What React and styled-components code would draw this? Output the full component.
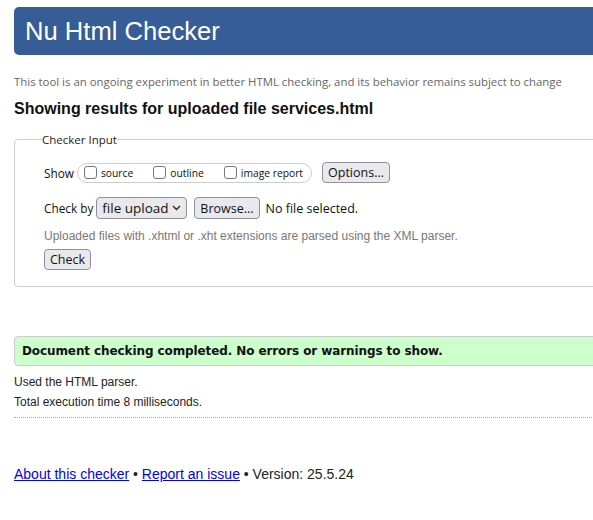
import React from "react";
import styled, { createGlobalStyle } from "styled-components";

const GlobalStyle = createGlobalStyle`
  body {
    margin: 0;
    overflow: hidden;
    background: #fff;
    color: #222;
    font-family: "Liberation Sans", Arial, sans-serif;
  }
`;

const Page = styled.div`
  width: 760px;
  padding: 7px 0 0 14px;
`;

const Header = styled.h1`
  margin: 0;
  height: 48px;
  display: flex;
  align-items: center;
  padding-left: 11px;
  background: #365d95;
  color: #fff;
  border-radius: 5px;
  font-size: 25.6px;
  font-weight: normal;
  font-family: "Liberation Sans", Arial, sans-serif;
`;

const Subtitle = styled.p`
  margin: 19px 0 0;
  font-family: "Open Sans", sans-serif;
  font-size: 11.4px;
  color: #666;
  line-height: 16px;
`;

const Heading = styled.h2`
  margin: 9px 0 0;
  font-size: 16px;
  line-height: 20px;
  color: #111;
`;

const Fieldset = styled.fieldset`
  margin: 13px 0 0;
  padding: 10px 0 16px 27px;
  border: 1px solid #ccc;
  border-radius: 4px;
`;

const Legend = styled.legend`
  padding: 0;
  font-family: "Open Sans", sans-serif;
  font-size: 11.5px;
  color: #222;
`;

const Row = styled.div`
  display: flex;
  align-items: center;
  margin-left: 2px;
  margin-top: ${(p) => p.$top || 0}px;
  font-family: "Open Sans", sans-serif;
  font-size: 11.8px;
  color: #111;
`;

const Pill = styled.span`
  display: inline-flex;
  align-items: center;
  height: 18px;
  margin-left: 3px;
  padding: 0 8px 0 6px;
  border: 1px solid #ccc;
  border-radius: 10px;
`;

const Check = styled.label`
  display: inline-flex;
  align-items: center;
  font-size: 10.3px;
  margin-right: ${(p) => p.$gap || 0}px;

  input {
    width: 13px;
    height: 13px;
    margin: 0 4px 0 0;
    appearance: none;
    border: 1px solid #767676;
    border-radius: 3px;
    background: #fff;
  }
`;

const Button = styled.button`
  height: ${(p) => p.$h || 21}px;
  padding: 0 5px;
  margin-left: ${(p) => p.$ml || 0}px;
  border: 1px solid #8f8f9d;
  border-radius: 4px;
  background: #e9e9ed;
  color: #111;
  font-family: "Open Sans", sans-serif;
  font-size: 12.5px;
`;

const Select = styled.div`
  display: inline-flex;
  align-items: center;
  justify-content: space-between;
  width: 91px;
  height: 22px;
  box-sizing: border-box;
  margin-left: 3px;
  padding: 0 5px;
  border: 1px solid #8f8f9d;
  border-radius: 4px;
  background: #e9e9ed;
  color: #111;
  font-size: 13.5px;
`;

const Plain = styled.span`
  margin-left: ${(p) => p.$ml || 0}px;
  font-size: 12.5px;
  color: #111;
`;

const Hint = styled.p`
  margin: 9px 0 0 2px;
  font-size: 12px;
  color: #777;
  line-height: 16px;
`;

const Success = styled.div`
  margin-top: 49px;
  height: 30px;
  box-sizing: border-box;
  display: flex;
  align-items: center;
  padding-left: 7px;
  border: 1px solid #ccc;
  border-radius: 4px;
  background: #ccffcc;
  font-family: "DejaVu Sans", sans-serif;
  font-weight: bold;
  font-size: 12px;
  letter-spacing: -0.1px;
  color: #111;
`;

const Info = styled.p`
  margin: ${(p) => p.$top || 0}px 0 0;
  font-size: 12px;
  line-height: 16px;
  color: #222;
`;

const Divider = styled.hr`
  margin: 7px 0 0;
  border: 0;
  border-top: 1px dotted #aaa;
`;

const Footer = styled.p`
  margin: 48px 0 0;
  font-size: 14px;
  color: #222;

  a {
    color: #00e;
  }
`;

const App = () => (
  <>
    <GlobalStyle />
    <Page>
      <Header>Nu Html Checker</Header>
      <Subtitle>
        This tool is an ongoing experiment in better HTML checking, and its behavior remains subject to change
      </Subtitle>
      <Heading>Showing results for uploaded file services.html</Heading>
      <Fieldset>
        <Legend>Checker Input</Legend>
        <Row $top={5}>
          Show
          <Pill>
            <Check $gap={20}>
              <input type="checkbox" />
              source
            </Check>
            <Check $gap={20}>
              <input type="checkbox" />
              outline
            </Check>
            <Check>
              <input type="checkbox" />
              image report
            </Check>
          </Pill>
          <Button $ml={10}>Options...</Button>
        </Row>
        <Row $top={14}>
          Check by
          <Select>
            file upload
            <svg width="9" height="6" viewBox="0 0 9 6">
              <path d="M1 1l3.5 3.5L8 1" fill="none" stroke="#222" strokeWidth="1.3" />
            </svg>
          </Select>
          <Button $ml={7} $h={22}>Browse...</Button>
          <Plain $ml={6}>No file selected.</Plain>
        </Row>
        <Hint>Uploaded files with .xhtml or .xht extensions are parsed using the XML parser.</Hint>
        <Row $top={5}>
          <Button>Check</Button>
        </Row>
      </Fieldset>
      <Success>Document checking completed. No errors or warnings to show.</Success>
      <Info $top={8}>Used the HTML parser.</Info>
      <Info $top={4}>Total execution time 8 milliseconds.</Info>
      <Divider />
      <Footer>
        <a href="#about">About this checker</a> • <a href="#report">Report an issue</a> • Version: 25.5.24
      </Footer>
    </Page>
  </>
);

export default App;
